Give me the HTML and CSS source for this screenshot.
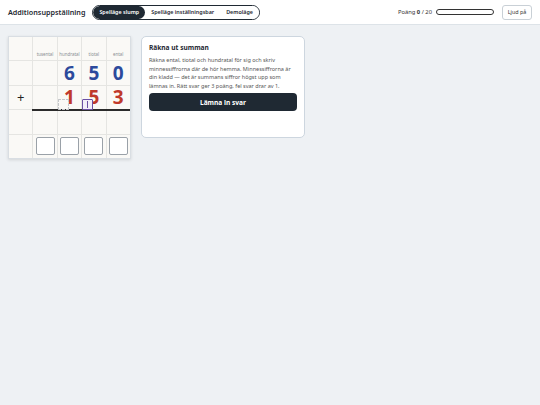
FILE: index.html
```html
<!DOCTYPE html>
<html lang="sv">
<head>
  <meta charset="UTF-8">
  <meta name="viewport" content="width=device-width, initial-scale=1.0">
  <title>Additionsuppställning</title>
  <link rel="stylesheet" href="styles.css">
</head>
<body>
  <header class="topbar">
    <h1 class="title">Additionsuppställning</h1>
    <nav class="modes">
      <button class="mode active">Spelläge slump</button>
      <button class="mode">Spelläge inställningsbar</button>
      <button class="mode">Demoläge</button>
    </nav>
    <div class="score">
      <span>Poäng <b>0</b> / 20</span>
      <div class="progress"><div class="progress-fill" style="width: 0%"></div></div>
    </div>
    <button class="sound">Ljud på</button>
  </header>

  <main class="board">
    <!-- Uppställningen: 5 kolumner, 5 rader -->
    <div class="sheet">
      <div class="cell"></div>
      <div class="cell label">tusental</div>
      <div class="cell label">hundratal</div>
      <div class="cell label">tiotal</div>
      <div class="cell label">ental</div>

      <div class="cell"></div>
      <div class="cell"></div>
      <div class="cell digit blue">6</div>
      <div class="cell digit blue">5</div>
      <div class="cell digit blue">0</div>

      <div class="cell sign">+</div>
      <div class="cell sum-line"></div>
      <div class="cell digit red sum-line">1<span class="carry"></span></div>
      <div class="cell digit red sum-line">5<span class="carry active"><i></i></span></div>
      <div class="cell digit red sum-line">3</div>

      <div class="cell"></div>
      <div class="cell"></div>
      <div class="cell"></div>
      <div class="cell"></div>
      <div class="cell"></div>

      <div class="cell"></div>
      <div class="cell answer"><input type="text" maxlength="1"></div>
      <div class="cell answer"><input type="text" maxlength="1"></div>
      <div class="cell answer"><input type="text" maxlength="1"></div>
      <div class="cell answer"><input type="text" maxlength="1"></div>
    </div>

    <section class="panel">
      <h2>Räkna ut summan</h2>
      <p>Räkna ental, tiotal och hundratal för sig och skriv minnessiffrorna där de hör hemma. Minnessiffrorna är din kladd — det är summans siffror högst upp som lämnas in. Rätt svar ger 3 poäng, fel svar drar av 1.</p>
      <button class="submit">Lämna in svar</button>
    </section>
  </main>
</body>
</html>
```
FILE: styles.css
```css
body {
  margin: 0;
  font-family: 'Noto Sans', 'Open Sans', sans-serif;
  background-color: #eef1f4;
  color: #1f2933;
  height: 100vh;
}

button {
  font-family: inherit;
  cursor: pointer;
}

/* Top bar */
.topbar {
  display: flex;
  align-items: center;
  height: 25px;
  padding: 0 8px;
  background-color: #fff;
  border-bottom: 1px solid #dde3e8;
  box-sizing: border-box;
}

.title {
  margin: 0 7px 0 0;
  font-size: 7.2px;
  font-weight: 600;
}

.modes {
  display: flex;
  height: 15px;
  border: 1px solid #1f2933;
  border-radius: 8px;
  overflow: hidden;
  box-sizing: border-box;
}

.mode {
  border: none;
  background: #fff;
  padding: 0 6px;
  font-size: 5.4px;
  font-weight: 600;
  color: #1f2933;
}

.mode.active {
  background-color: #1f2933;
  color: #fff;
  border-radius: 8px;
}

.score {
  display: flex;
  align-items: center;
  gap: 4px;
  margin-left: auto;
  font-size: 5.8px;
  color: #333;
}

.progress {
  width: 58px;
  height: 6px;
  border: 1px solid #333;
  border-radius: 4px;
  background: #fff;
  box-sizing: border-box;
  overflow: hidden;
}

.progress-fill {
  height: 100%;
  background: #2c4a9c;
}

.sound {
  margin-left: 8px;
  width: 30px;
  height: 15px;
  padding: 0;
  border: 1px solid #c9d0d6;
  border-radius: 3px;
  background: #fff;
  font-size: 5.4px;
  color: #333;
}

/* Board */
.board {
  display: flex;
  align-items: flex-start;
  gap: 11px;
  padding: 11px 8px;
}

.sheet {
  display: grid;
  grid-template-columns: repeat(5, 23.4px);
  grid-auto-rows: 23.4px;
  gap: 1px;
  background-color: #e5e5e2;
  border: 1px solid #d9dee3;
  box-shadow: 0 1px 3px rgba(0, 0, 0, 0.12);
}

.cell {
  position: relative;
  display: flex;
  align-items: center;
  justify-content: center;
  background-color: #faf9f6;
}

.label {
  align-items: flex-end;
  padding-bottom: 3px;
  font-size: 4.4px;
  color: #8a8f94;
  box-sizing: border-box;
}

.digit {
  font-size: 19px;
  font-weight: 700;
}

.blue {
  color: #2c4a9c;
}

.red {
  color: #c0392b;
}

.sign {
  font-size: 13px;
  color: #222;
}

.sum-line::after {
  content: '';
  position: absolute;
  left: -1px;
  right: 0;
  bottom: -2px;
  height: 2px;
  background: #2b2b2b;
  z-index: 1;
}

.carry {
  position: absolute;
  left: 0;
  bottom: -1px;
  width: 11px;
  height: 11px;
  border: 1px dashed #c5c7ca;
  border-radius: 1px;
  box-sizing: border-box;
  z-index: 2;
}

.carry.active {
  border: 1px solid #6a4fa3;
  background: #f1edf9;
}

.carry.active i {
  position: absolute;
  left: 4px;
  top: 1px;
  bottom: 1px;
  width: 1px;
  background: #6a4fa3;
}

.answer input {
  width: 19px;
  height: 18px;
  padding: 0;
  border: 1px solid #9aa1a8;
  border-radius: 2px;
  background: #fff;
  box-sizing: border-box;
}

/* Instruction panel */
.panel {
  width: 164px;
  margin-left: -1px;
  padding: 6px 7px 26px;
  background: #fff;
  border: 1px solid #cdd6df;
  border-radius: 5px;
  box-sizing: border-box;
}

.panel h2 {
  margin: 0 0 4px;
  font-size: 6.6px;
  font-weight: 700;
}

.panel p {
  margin: 0 0 3px;
  font-size: 5.5px;
  line-height: 8.6px;
  color: #555;
}

.submit {
  display: block;
  width: 100%;
  height: 18px;
  border: none;
  border-radius: 4px;
  background-color: #1f2933;
  color: #fff;
  font-size: 6.6px;
  font-weight: 700;
}
```
